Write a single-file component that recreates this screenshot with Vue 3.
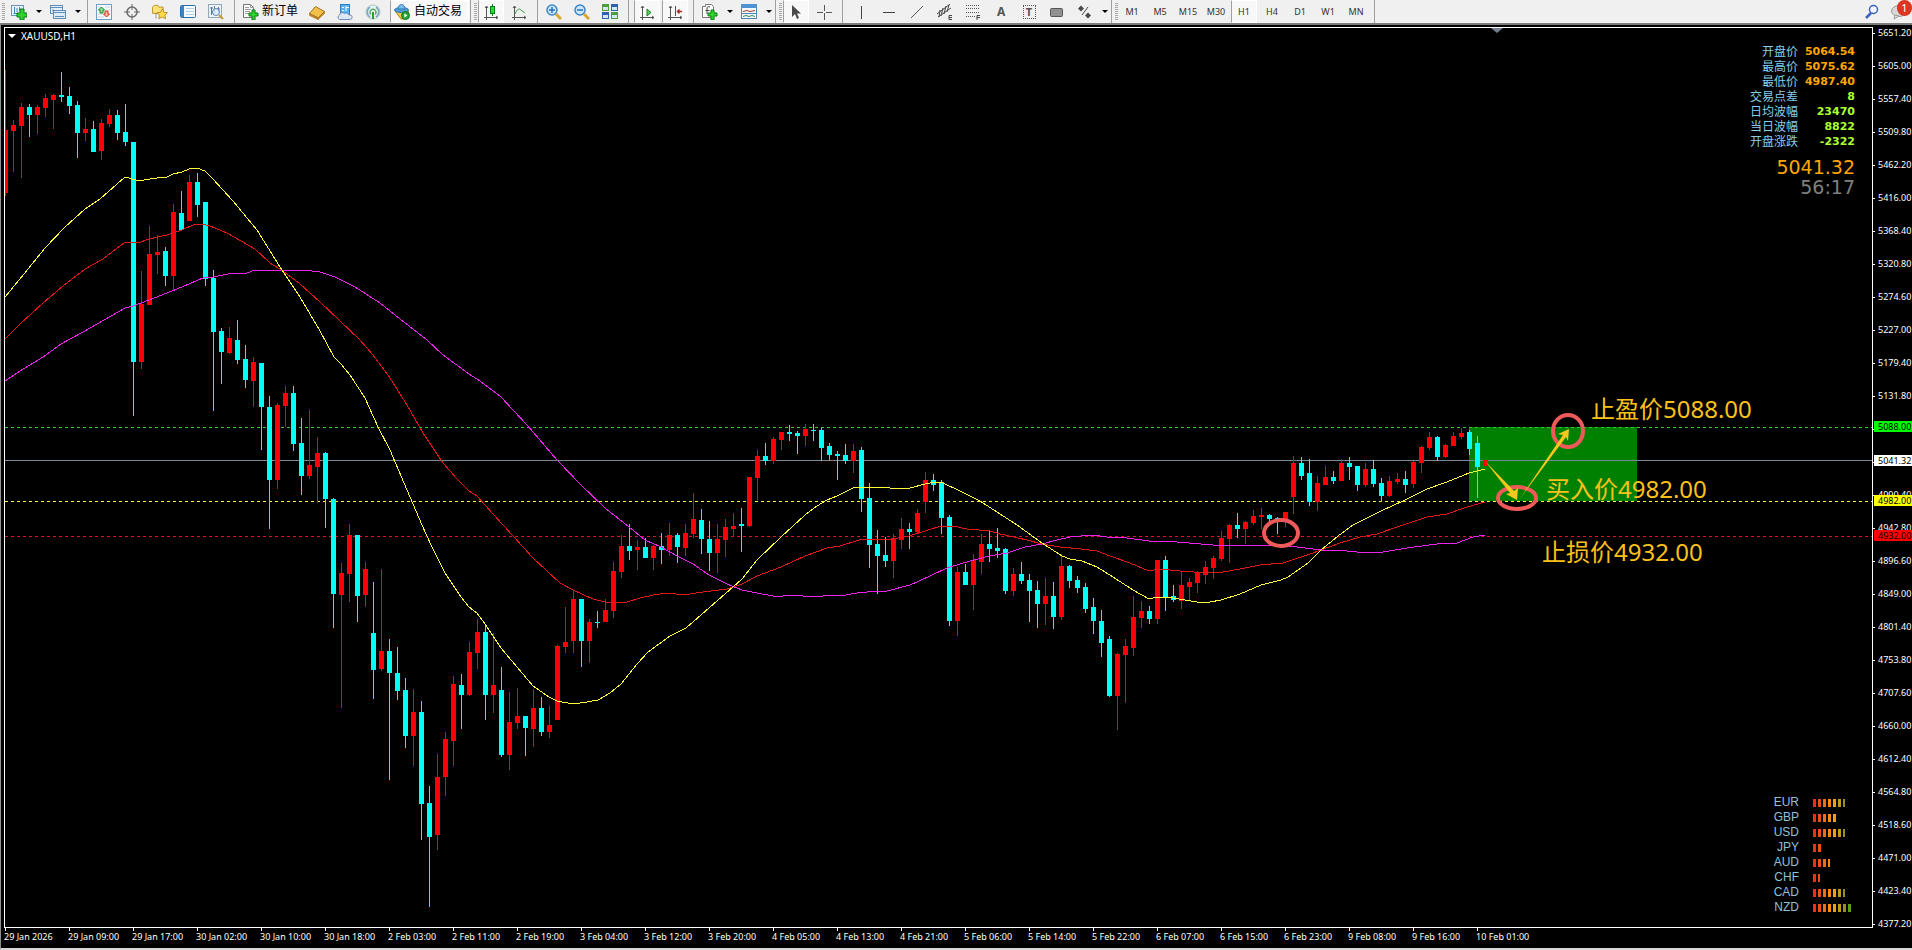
<template>
  <div class="terminal">
    <svg class="sprite" aria-hidden="true">
      <symbol id="i-new-chart" viewBox="0 0 16 16">
        <rect x="0.5" y="1.5" width="12" height="10" fill="#e8f2fb" stroke="#6f95b5" />
        <path d="M2.5 9.5h8M3.5 3v7M6 4v4M8.5 3v4" stroke="#4f86b8" fill="none" />
        <path d="M9 5h4v4h3v4h-3v3H9v-3H6V9h3z" fill="#2fd32f" stroke="#0c7d12" />
      </symbol>
      <symbol id="i-profiles" viewBox="0 0 16 16">
        <rect x="0.5" y="1.5" width="12" height="8" fill="#e4f0fa" stroke="#5d8fba" />
        <path d="M1 3.5h11" stroke="#5d8fba" />
        <rect x="3.5" y="6.5" width="12" height="8" fill="#dcebf8" stroke="#5d8fba" />
        <path d="M4 8.5h11M5 12.5h9M3 5v3" stroke="#5d8fba" />
      </symbol>
      <symbol id="i-market" viewBox="0 0 16 16">
        <rect x="0.5" y="0.5" width="15" height="15" fill="#f8fbff" stroke="#6d9cc6" />
        <path d="M2 3h3M2 6h2M9 3h5M11 6h3M2 10h4M2 13h6" stroke="#c3d3e2" />
        <path d="M5.500 3l3 3h-1.500v3h-3v-3h-1.500z" fill="#8de08d" stroke="#1a8a2a" />
        <path d="M10.500 13l-3-3h1.500v-3h3v3h1.500z" fill="#ffb4a0" stroke="#d0301a" />
      </symbol>
      <symbol id="i-target" viewBox="0 0 16 16">
        <circle cx="8" cy="8" r="5" fill="none" stroke="#6a6a6a" stroke-width="1.500" />
        <path d="M8 0v6M8 10v6M0 8h6M10 8h6" stroke="#6a6a6a" />
      </symbol>
      <symbol id="i-favorites" viewBox="0 0 18 16">
        <path d="M0.500 2.500l2-2h4l1 2h5v7h-12z" fill="#ffe27a" stroke="#b58a1e" />
        <path d="M4.500 10v6" stroke="#333" stroke-dasharray="1 1" />
        <path d="M11.500 4.500l2 3.800 4 .5-3 2.800.8 4-3.800-2-3.800 2 .8-4-3-2.800 4-.5z" fill="#ffd94a" stroke="#b58a1e" />
      </symbol>
      <symbol id="i-book" viewBox="0 0 16 16">
        <rect x="0.500" y="1.500" width="15" height="12" rx="1" fill="#f4f9fe" stroke="#2d6fae" />
        <rect x="1" y="2" width="3" height="11" fill="#3f82c2" />
        <path d="M6 4.500h8M6 7.500h8M6 10.500h8" stroke="#b5cfe6" />
      </symbol>
      <symbol id="i-tester" viewBox="0 0 16 16">
        <rect x="0.500" y="0.500" width="13" height="13" fill="#eef4fa" stroke="#8fa8be" />
        <path d="M3.500 3v8M6.500 2v7M10.500 3v5M2 4h3M9 5h3" stroke="#59789a" />
        <circle cx="8" cy="8" r="3.500" fill="#d9ecfa" fill-opacity="0.800" stroke="#5c84a6" />
        <path d="M11 11l4 4" stroke="#c99a32" stroke-width="2" />
      </symbol>
      <symbol id="i-order" viewBox="0 0 16 16">
        <path d="M0.500 0.500h7l3 3v10h-10z" fill="#fdfdfd" stroke="#777" />
        <path d="M7.500 0.500v3h3M2 3.500h4M2 5.500h6M2 7.500h5M2 9.500h4" stroke="#999" fill="none" />
        <path d="M9 6h3v3h3v3h-3v4H9v-4H6V9h3z" fill="#2fd32f" stroke="#0c7d12" />
      </symbol>
      <symbol id="i-gold" viewBox="0 0 16 16">
        <path d="M0.500 9.500L6.500 2.500l9 5-6 6.500z" fill="#f1c04a" stroke="#a5711a" />
        <path d="M0.500 9.500l8.500 4.500v1.500l-8.500-4zM9 14l6.500-6.500v2L9 15.500z" fill="#c98a22" stroke="#9a6412" stroke-width="0.500" />
      </symbol>
      <symbol id="i-server" viewBox="0 0 16 16">
        <rect x="3.500" y="0.500" width="9" height="10" fill="#5ab0ee" stroke="#2b7fc4" />
        <path d="M5 3.500h2M5 6.500h2M9 2v5M9 3.500h3" stroke="#fff" />
        <path d="M2.500 15.500a2.500 2.500 0 0 1 0-4.500 3 3 0 0 1 5-1.500 3 3 0 0 1 4.500 1.500 2.300 2.300 0 0 1 1.500 4.500z" fill="#dde8f4" stroke="#6a8cb4" />
      </symbol>
      <symbol id="i-signal" viewBox="0 0 16 16">
        <circle cx="8" cy="8" r="7" fill="#e9f3ee" stroke="#a4c8be" />
        <path d="M5 13a6 6 0 0 1 0-10M11 3a6 6 0 0 1 0 10" stroke="#7aa4c0" fill="none" stroke-width="1.500" />
        <path d="M6 10.500a3 3 0 1 1 4 0" stroke="#5cb06a" fill="none" stroke-width="1.500" />
        <path d="M8 8v7" stroke="#2f9a3a" stroke-width="2" />
      </symbol>
      <symbol id="i-auto" viewBox="0 0 16 16">
        <path d="M1 7l6 8h3l5-8z" fill="#f5c842" stroke="#b08a22" />
        <ellipse cx="7.500" cy="6" rx="7" ry="2.500" fill="#4f9ed8" stroke="#2d78b4" />
        <path d="M4 5c0-6 7-6 7 0z" fill="#7dbdea" stroke="#2d78b4" />
        <circle cx="11.500" cy="11.500" r="4" fill="#27a836" stroke="#107a1c" />
        <path d="M10.300 9.500v4l3-2z" fill="#fff" />
      </symbol>
      <symbol id="i-candles" viewBox="0 0 16 16">
        <path d="M3.500 2v14M1 13.500h14M2 4l1.500-2L5 4M13 12l2 1.500L13 15" stroke="#555" fill="none" />
        <path d="M9.500 0v12" stroke="#0c7d12" />
        <rect x="7.500" y="2.500" width="4" height="7" fill="#2fd04a" stroke="#0c7d12" />
      </symbol>
      <symbol id="i-line" viewBox="0 0 16 16">
        <path d="M3.500 2v14M1 13.500h14M2 4l1.500-2L5 4M13 12l2 1.500L13 15" stroke="#555" fill="none" />
        <path d="M4 10c2-5 4-6 6-4l4 3" stroke="#3d9a4a" fill="none" />
      </symbol>
      <symbol id="i-zoom-in" viewBox="0 0 16 16">
        <path d="M10 10l5 5" stroke="#d8a832" stroke-width="3" />
        <circle cx="6" cy="6" r="5" fill="#cfe7fa" stroke="#3c87c8" stroke-width="1.500" />
        <path d="M3 6h6M6 3v6" stroke="#2472bd" stroke-width="1.500" />
      </symbol>
      <symbol id="i-zoom-out" viewBox="0 0 16 16">
        <path d="M10 10l5 5" stroke="#d8a832" stroke-width="3" />
        <circle cx="6" cy="6" r="5" fill="#cfe7fa" stroke="#3c87c8" stroke-width="1.500" />
        <path d="M3 6h6" stroke="#2472bd" stroke-width="1.500" />
      </symbol>
      <symbol id="i-tile" viewBox="0 0 16 16">
        <path d="M0 0h7v7H0zM9 8h7v7H9z" fill="#4c9e3c" />
        <path d="M9 0h7v7H9zM0 8h7v7H0z" fill="#2d62ae" />
        <path d="M1 3h5v3H1zM10 3h5v3h-5zM1 11h5v3H1zM10 11h5v3h-5z" fill="#d4e6f2" />
      </symbol>
      <symbol id="i-scroll" viewBox="0 0 16 16">
        <path d="M3.500 2v14M1 13.500h14M2 4l1.500-2L5 4M13 12l2 1.500L13 15" stroke="#555" fill="none" />
        <path d="M8 5v7l4-3.500z" fill="#62d060" stroke="#14801c" />
      </symbol>
      <symbol id="i-shift" viewBox="0 0 16 16">
        <path d="M3.500 2v14M1 13.500h14M2 4l1.500-2L5 4M13 12l2 1.500L13 15M8.500 2v10" stroke="#555" fill="none" />
        <path d="M15 7.500h-4M12.500 5.500l-2 2 2 2" stroke="#b02a1a" fill="none" stroke-width="1.500" />
      </symbol>
      <symbol id="i-indicator" viewBox="0 0 16 16">
        <path d="M0.500 2.500h3v-2h6l2 2v11h-11z" fill="#fdfdfd" stroke="#777" />
        <path d="M8 3c-2-1-3 0-3 2v5M3.500 6.500h4" stroke="#444" fill="none" />
        <path d="M9 6h3v3h3v3h-3v4H9v-4H6V9h3z" fill="#2fd32f" stroke="#0c7d12" />
      </symbol>
      <symbol id="i-template" viewBox="0 0 16 16">
        <rect x="0.500" y="0.500" width="15" height="14" fill="#f6fafd" stroke="#4f86b8" />
        <path d="M0 0h16v4H0z" fill="#4d92d2" />
        <path d="M2 7.500l4-1 3 1 5-1" stroke="#a03a2a" fill="none" />
        <path d="M1 9.500h14" stroke="#4f86b8" />
        <path d="M2 12.500l3-1 3 1 3-1 3 1" stroke="#2f8a4a" fill="none" />
      </symbol>
      <symbol id="i-cursor" viewBox="0 0 16 16">
        <path d="M4 1v12l3-3 2 5 2-1-2-4.500h4z" fill="#4a4a4a" />
      </symbol>
      <symbol id="i-cross" viewBox="0 0 16 16">
        <path d="M8.500 1v6M8.500 9v7M1 8.500h6M10 8.500h6" stroke="#555" />
      </symbol>
      <symbol id="i-vline" viewBox="0 0 16 16"><path d="M8.500 2v13" stroke="#444" /></symbol>
      <symbol id="i-hline" viewBox="0 0 16 16"><path d="M2 8.500h12" stroke="#444" /></symbol>
      <symbol id="i-trend" viewBox="0 0 16 16"><path d="M2 14L14 2" stroke="#555" /></symbol>
      <symbol id="i-channel" viewBox="0 0 16 16">
        <path d="M0 10L13 0M1 13L14 4M3 6l-1 7M6 4L4 12M9 2L7 10M12 1l-2 7" stroke="#444" fill="none" />
        <path d="M15 11.500h-3v4h3M12 13.500h3" stroke="#444" fill="none" />
      </symbol>
      <symbol id="i-fibo" viewBox="0 0 16 16">
        <path d="M1 1.500h13M1 4.500h13M1 8.500h13M1 12.500h9" stroke="#555" stroke-dasharray="1 1" />
        <path d="M15 11.500h-3v5M12 13.500h3" stroke="#444" fill="none" />
      </symbol>
      <symbol id="i-rect" viewBox="0 0 16 16">
        <rect x="1.500" y="4.500" width="12" height="8" rx="1" fill="#909090" stroke="#555" />
      </symbol>
      <symbol id="i-arrows" viewBox="0 0 16 16">
        <path d="M4 1.500l3 3-3 3-3-3zM11 8.500l3 3-3 3-3-3z" fill="#4a4a4a" />
        <path d="M11 3l-6 8" stroke="#4a4a4a" />
      </symbol>
      <symbol id="i-search" viewBox="0 0 16 16">
        <path d="M7 9l-5 5" stroke="#3a5fc0" stroke-width="2.500" />
        <circle cx="9.500" cy="5.500" r="4" fill="#f4f8ff" stroke="#3a5fc0" stroke-width="1.500" />
      </symbol>
      <symbol id="i-chat" viewBox="0 0 16 16">
        <ellipse cx="8" cy="7" rx="7.500" ry="5.500" fill="#d8d8d8" stroke="#9a9a9a" />
        <path d="M4 11l-1 4 5-3z" fill="#e8e8e8" stroke="#9a9a9a" />
      </symbol>
    </svg>

    <header class="toolbar">
      <span class="grip grip--first"></span>
      <template v-for="(item, i) in tools" :key="i">
        <span v-if="item.kind === 'sep'" class="sep" :class="{ 'sep--wide': item.wide }"></span>
        <span v-else-if="item.kind === 'grip'" class="group-edge"><span class="grip"></span></span>
        <button
          v-else
          type="button"
          class="tool"
          :class="{ 'tool--menu': item.menu, 'tool--on': item.on, 'tool--text': item.text }"
          :aria-label="item.label"
        >
          <svg v-if="item.icon" class="tool__icon" aria-hidden="true"><use :href="'#i-' + item.icon" /></svg>
          <span v-if="item.glyph" class="tool__glyph" :class="{ 'tool__glyph--boxed': item.boxed }">{{ item.glyph }}</span>
          <span v-if="item.text" class="tool__text">{{ item.text }}</span>
          <span v-if="item.menu" class="caret"></span>
        </button>
      </template>
      <button
        v-for="p in periods"
        :key="p"
        type="button"
        class="tool tool--period"
        :class="{ 'tool--on': p === period }"
        @click="period = p"
      >{{ p }}</button>
      <span class="sep"></span>

      <div class="toolbar__right">
        <button type="button" class="tool" aria-label="搜索">
          <svg class="tool__icon" aria-hidden="true"><use href="#i-search" /></svg>
        </button>
        <button type="button" class="tool tool--chat" aria-label="消息">
          <svg class="tool__icon" aria-hidden="true"><use href="#i-chat" /></svg>
          <span class="badge">1</span>
        </button>
      </div>
    </header>

    <main class="chart-window">
      <div class="plot">
        <svg class="plot__canvas">
          <!-- all coordinates are counted from the window corner -->
          <g transform="translate(-5 -28)">
            <rect x="1469" y="427" width="168" height="74" fill="#008000" />
            <polygon points="1491,28 1503,28 1497,33" fill="#708090" />

            <g shape-rendering="crispEdges">
              <line
                v-for="l in levels"
                :key="l.y"
                x1="5"
                x2="101%"
                :y1="l.y + 0.5"
                :y2="l.y + 0.5"
                :stroke="l.stroke"
                :stroke-dasharray="l.dash"
              />
              <g v-for="(c, i) in candles" :key="i" :fill="c[0] ? '#ff0000' : '#00ffff'">
                <rect :x="5 + i * 8" :y="c[1]" width="1" :height="c[4] - c[1]" />
                <rect :x="3 + i * 8" :y="c[2]" width="5" :height="c[3] - c[2]" />
              </g>
              <polyline v-for="m in averages" :key="m.color" :points="m.points" :stroke="m.color" fill="none" />
            </g>

            <g fill="none" stroke="#ee5a5a" stroke-width="4">
              <ellipse cx="1281" cy="533" rx="17" ry="13" />
              <ellipse cx="1517" cy="498" rx="19" ry="11" />
              <ellipse cx="1568" cy="431" rx="15" ry="16" />
            </g>
            <g fill="#f8c81c">
              <polygon points="1485,461 1514,491 1518,488 1517,500 1506,494 1510,493" />
              <polygon points="1519,500 1563,435 1558,434 1569,429 1568,441 1566,437" />
            </g>
            <g class="note">
              <text x="1591" y="418">止盈价5088.00</text>
              <text x="1546" y="498">买入价4982.00</text>
              <text x="1542" y="561">止损价4932.00</text>
            </g>
          </g>
        </svg>

        <div class="symbol"><span class="symbol__arrow"></span>XAUUSD,H1</div>

        <div class="quote">
          <dl class="quote__list">
            <div v-for="q in quotes" :key="q.name" class="quote__row">
              <dt>{{ q.name }}</dt>
              <dd :class="{ 'is-price': q.price }">{{ q.value }}</dd>
            </div>
          </dl>
          <div class="quote__last">5041.32</div>
          <div class="quote__timer">56:17</div>
        </div>

        <ul class="strength">
          <li v-for="s in strength" :key="s.code">
            <span class="strength__code">{{ s.code }}</span>
            <span class="strength__bars">
              <i v-for="n in s.bars" :key="n" :style="{ background: barColors[n - 1] }"></i>
              <i v-if="s.half" class="half" :style="{ background: barColors[s.bars] }"></i>
            </span>
          </li>
        </ul>
      </div>

      <div class="price-axis">
        <span v-for="p in prices" :key="p" class="price">{{ p }}</span>
        <span v-for="t in tags" :key="t.text" class="tag" :class="'tag--' + t.tone" :style="{ top: t.top + 'px' }">{{ t.text }}</span>
      </div>

      <div class="time-axis">
        <span v-for="t in times" :key="t" class="time">{{ t }}</span>
      </div>
    </main>
  </div>
</template>

<script setup>
import { ref } from 'vue'

const sep = { kind: 'sep' }
const wideSep = { kind: 'sep', wide: true }
const grip = { kind: 'grip' }

const tools = [
  { icon: 'new-chart', menu: true, label: '新图表' },
  { icon: 'profiles', menu: true, label: '配置文件' },
  sep,
  { icon: 'market', label: '市场报价' },
  { icon: 'target', label: '数据窗口' },
  { icon: 'favorites', label: '导航' },
  { icon: 'book', label: '终端' },
  { icon: 'tester', label: '策略测试' },
  sep,
  { icon: 'order', text: '新订单', label: '新订单' },
  { icon: 'gold', label: '编辑器' },
  { icon: 'server', label: '云服务' },
  { icon: 'signal', label: '信号' },
  { icon: 'auto', text: '自动交易', on: true, label: '自动交易' },
  grip,
  { icon: 'candles', on: true, label: '蜡烛图' },
  { icon: 'line', label: '折线图' },
  sep,
  { icon: 'zoom-in', label: '放大' },
  { icon: 'zoom-out', label: '缩小' },
  { icon: 'tile', label: '平铺窗口' },
  wideSep,
  { icon: 'scroll', on: true, label: '自动滚动' },
  { icon: 'shift', on: true, label: '图表平移' },
  sep,
  { icon: 'indicator', menu: true, label: '指标' },
  { icon: 'template', menu: true, label: '模板' },
  grip,
  { icon: 'cursor', on: true, label: '光标' },
  { icon: 'cross', label: '十字线' },
  wideSep,
  { icon: 'vline', label: '垂直线' },
  { icon: 'hline', label: '水平线' },
  { icon: 'trend', label: '趋势线' },
  { icon: 'channel', label: '通道' },
  { icon: 'fibo', label: '斐波那契' },
  { glyph: 'A', label: '文字' },
  { glyph: 'T', boxed: true, label: '文字标签' },
  { icon: 'rect', label: '矩形' },
  { icon: 'arrows', menu: true, label: '箭头' },
  grip
]

const periods = ['M1', 'M5', 'M15', 'M30', 'H1', 'H4', 'D1', 'W1', 'MN']
const period = ref('H1')

const quotes = [
  { name: '开盘价', value: '5064.54', price: true },
  { name: '最高价', value: '5075.62', price: true },
  { name: '最低价', value: '4987.40', price: true },
  { name: '交易点差', value: '8' },
  { name: '日均波幅', value: '23470' },
  { name: '当日波幅', value: '8822' },
  { name: '开盘涨跌', value: '-2322' }
]

const barColors = ['#ee3018', '#f04c18', '#ee7014', '#f88a10', '#eea010', '#c09a18', '#94921c', '#5aa018']
const strength = [
  { code: 'EUR', bars: 6, half: true },
  { code: 'GBP', bars: 5 },
  { code: 'USD', bars: 6, half: true },
  { code: 'JPY', bars: 2 },
  { code: 'AUD', bars: 3, half: true },
  { code: 'CHF', bars: 1, half: true },
  { code: 'CAD', bars: 6, half: true },
  { code: 'NZD', bars: 8 }
]

const prices = [
  '5651.20', '5605.00', '5557.40', '5509.80', '5462.20', '5416.00', '5368.40',
  '5320.80', '5274.60', '5227.00', '5179.40', '5131.80', '5085.60', '5038.00',
  '4990.40', '4942.80', '4896.60', '4849.00', '4801.40', '4753.80', '4707.60',
  '4660.00', '4612.40', '4564.80', '4518.60', '4471.00', '4423.40', '4377.20'
]

const tags = [
  { text: '5088.00', top: 394, tone: 'profit' },
  { text: '5041.32', top: 428, tone: 'last' },
  { text: '4982.00', top: 468, tone: 'entry' },
  { text: '4932.00', top: 503, tone: 'stop' }
]

const times = [
  '29 Jan 2026', '29 Jan 09:00', '29 Jan 17:00', '30 Jan 02:00', '30 Jan 10:00', '30 Jan 18:00',
  '2 Feb 03:00', '2 Feb 11:00', '2 Feb 19:00', '3 Feb 04:00', '3 Feb 12:00', '3 Feb 20:00',
  '4 Feb 05:00', '4 Feb 13:00', '4 Feb 21:00', '5 Feb 06:00', '5 Feb 14:00', '5 Feb 22:00',
  '6 Feb 07:00', '6 Feb 15:00', '6 Feb 23:00', '9 Feb 08:00', '9 Feb 16:00', '10 Feb 01:00'
]

const levels = [
  { y: 427, stroke: '#32cd32', dash: '3 3' },
  { y: 460, stroke: '#778899' },
  { y: 501, stroke: '#ffff33', dash: '3 3' },
  { y: 536, stroke: '#dc1428', dash: '3 3' }
]

// [rising, high, body top, body bottom, low]
const candles = [
  [1, 70, 130, 193, 196], [1, 120, 125, 131, 172], [1, 103, 107, 126, 178], [0, 104, 107, 115, 137],
  [1, 105, 107, 115, 134], [1, 94, 98, 108, 117], [1, 94, 95, 100, 129], [0, 72, 95, 97, 102],
  [0, 87, 96, 106, 114], [0, 101, 105, 133, 158], [1, 118, 129, 133, 141], [0, 121, 129, 152, 152],
  [1, 119, 123, 151, 160], [1, 109, 115, 124, 127], [0, 110, 115, 133, 140], [0, 104, 132, 142, 146],
  [0, 142, 142, 362, 416], [1, 271, 304, 362, 369], [1, 226, 254, 305, 305], [1, 235, 252, 255, 274],
  [0, 247, 251, 276, 286], [1, 204, 212, 276, 290], [0, 191, 213, 230, 230], [1, 175, 182, 221, 221],
  [0, 173, 182, 205, 217], [0, 202, 202, 279, 286], [0, 270, 278, 332, 411], [0, 328, 331, 352, 384],
  [1, 327, 338, 353, 354], [0, 320, 340, 360, 364], [0, 345, 359, 380, 388], [1, 357, 362, 381, 407],
  [0, 363, 363, 407, 450], [0, 396, 407, 480, 529], [1, 403, 405, 480, 489], [1, 386, 393, 406, 427],
  [0, 386, 393, 444, 451], [0, 418, 443, 476, 495], [1, 410, 465, 476, 479], [1, 437, 453, 467, 503],
  [0, 452, 453, 499, 528], [0, 498, 499, 594, 628], [1, 563, 573, 595, 708], [1, 524, 535, 574, 602],
  [0, 535, 535, 596, 622], [1, 562, 569, 595, 607], [0, 582, 633, 670, 699], [1, 569, 651, 669, 671],
  [0, 639, 651, 673, 780], [0, 647, 673, 691, 700], [0, 678, 690, 736, 748], [1, 689, 712, 736, 766],
  [0, 701, 712, 804, 840], [0, 786, 803, 837, 907], [1, 754, 777, 835, 850], [1, 732, 739, 777, 796],
  [1, 676, 684, 741, 766], [0, 674, 685, 695, 729], [1, 642, 652, 695, 696], [1, 619, 632, 653, 669],
  [0, 625, 632, 695, 720], [1, 633, 685, 695, 713], [0, 667, 690, 755, 757], [1, 692, 722, 755, 770],
  [1, 688, 716, 723, 729], [0, 716, 716, 728, 756], [1, 689, 708, 729, 747], [0, 697, 708, 732, 736],
  [1, 706, 725, 732, 738], [1, 645, 646, 720, 720], [1, 607, 642, 647, 653], [1, 590, 599, 641, 653],
  [0, 599, 599, 641, 667], [1, 619, 622, 641, 663], [0, 611, 622, 623, 628], [1, 599, 610, 622, 622],
  [1, 562, 571, 611, 618], [1, 535, 546, 572, 578], [0, 524, 546, 551, 560], [1, 540, 547, 550, 570],
  [0, 538, 547, 558, 558], [1, 545, 546, 558, 570], [0, 533, 546, 550, 564], [1, 523, 535, 550, 556],
  [0, 533, 535, 547, 563], [1, 524, 533, 548, 556], [1, 493, 519, 534, 538], [0, 509, 520, 539, 554],
  [0, 521, 539, 553, 571], [1, 524, 539, 553, 573], [1, 519, 527, 540, 557], [1, 513, 526, 529, 537],
  [0, 508, 524, 526, 552], [1, 477, 477, 526, 527], [1, 450, 456, 478, 500], [0, 443, 456, 461, 465],
  [1, 437, 439, 461, 464], [1, 432, 432, 440, 450], [0, 425, 432, 434, 441], [0, 431, 433, 436, 454],
  [1, 424, 429, 436, 446], [0, 424, 430, 431, 441], [0, 428, 430, 448, 461], [0, 443, 446, 455, 460],
  [0, 451, 454, 456, 480], [0, 444, 455, 461, 464], [1, 444, 451, 461, 473], [0, 447, 450, 499, 512],
  [0, 483, 498, 545, 568], [0, 530, 544, 556, 594], [0, 537, 555, 561, 567], [1, 534, 538, 561, 578],
  [1, 518, 529, 540, 549], [0, 523, 529, 532, 549], [1, 509, 513, 532, 533], [1, 472, 480, 502, 513],
  [0, 474, 480, 485, 491], [0, 480, 482, 518, 534], [0, 515, 517, 621, 626], [1, 567, 572, 621, 636],
  [0, 564, 572, 585, 585], [1, 554, 560, 585, 610], [1, 534, 544, 562, 574], [0, 530, 544, 549, 562],
  [0, 528, 548, 551, 558], [0, 548, 549, 591, 594], [1, 568, 574, 591, 596], [0, 562, 574, 581, 584],
  [0, 574, 580, 591, 622], [0, 581, 590, 604, 628], [1, 578, 596, 604, 625], [0, 582, 596, 617, 629],
  [1, 554, 566, 617, 620], [0, 565, 566, 581, 588], [0, 576, 580, 588, 593], [0, 583, 587, 609, 613],
  [0, 598, 607, 621, 634], [0, 610, 621, 643, 657], [0, 636, 639, 696, 697], [1, 653, 654, 696, 730],
  [1, 639, 646, 655, 703], [1, 596, 617, 648, 656], [1, 601, 611, 618, 628], [0, 606, 611, 619, 624],
  [1, 560, 560, 619, 624], [0, 556, 560, 597, 611], [0, 585, 596, 600, 602], [1, 572, 585, 601, 609],
  [1, 578, 582, 587, 601], [1, 571, 573, 583, 593], [1, 561, 567, 575, 584], [1, 556, 558, 568, 579],
  [1, 531, 538, 559, 561], [1, 524, 525, 539, 563], [0, 513, 525, 529, 538], [1, 521, 522, 529, 544],
  [1, 510, 516, 523, 525], [1, 508, 515, 517, 529], [0, 514, 515, 519, 522], [0, 517, 518, 519, 534],
  [1, 512, 512, 519, 527], [1, 456, 463, 497, 514], [0, 457, 463, 476, 480], [0, 459, 473, 502, 506],
  [1, 476, 483, 502, 511], [1, 466, 477, 485, 485], [0, 471, 477, 481, 484], [1, 459, 463, 481, 481],
  [0, 457, 463, 467, 480], [0, 466, 466, 485, 491], [1, 463, 469, 485, 487], [0, 460, 469, 484, 487],
  [0, 478, 483, 496, 502], [1, 476, 481, 496, 497], [1, 473, 479, 482, 484], [0, 471, 479, 485, 493],
  [1, 461, 462, 484, 488], [1, 446, 447, 463, 473], [1, 432, 437, 448, 450], [0, 436, 437, 457, 461],
  [1, 444, 445, 457, 458], [1, 432, 436, 446, 446], [1, 428, 433, 437, 439], [0, 430, 432, 449, 455],
  [0, 436, 443, 467, 498], [1, 459, 460, 466, 467]
]

const averages = [
  {
    color: '#ee22ee',
    points: '5,381 20,371 43,357 61,344 83,332 125,308 133,306 149,300 177,289 203,278 213,277 233,273 247,273 255,270 267,271 283,270 303,270 320,272 335,277 355,287 380,303 400,319 427,340 443,355 469,374 480,381 501,397 527,425 557,460 581,485 605,508 629,527 645,540 661,547 677,556 693,564 709,575 727,584 742,590 757,593 773,596 783,596 790,595 803,596 823,596 832,595 840,596 857,593 877,591 887,591 910,585 930,576 947,568 963,563 989,556 1007,553 1025,547 1042,544 1057,540 1070,537 1093,535 1107,537 1127,538 1149,541 1177,542 1213,545 1280,545 1297,547 1321,550 1347,551 1367,553 1383,552 1407,548 1437,544 1457,543 1473,537 1485,535'
  },
  {
    color: '#e01818',
    points: '5,339 20,324 43,303 63,286 85,269 103,259 125,242 138,243 149,239 167,235 182,230 193,225 202,224 210,226 227,233 255,249 270,263 283,271 300,284 320,302 340,321 360,340 373,355 388,375 407,405 423,433 443,463 457,479 469,491 477,496 493,514 513,536 533,558 560,583 573,590 593,599 605,602 627,602 640,598 653,595 668,593 683,595 703,592 727,589 742,584 757,576 781,567 805,556 827,548 840,546 859,540 867,539 877,539 893,539 909,536 925,531 941,526 953,526 967,529 990,531 1000,534 1027,540 1042,544 1060,547 1081,549 1097,551 1110,556 1130,563 1149,571 1160,569 1180,571 1207,573 1223,572 1240,569 1260,565 1283,563 1310,554 1321,550 1340,543 1360,537 1377,534 1400,526 1427,517 1447,514 1467,507 1485,502'
  },
  {
    color: '#ffff3c',
    points: '5,297 24,274 45,248 65,227 85,209 100,199 125,177 136,180 144,180 157,178 167,177 173,174 182,172 189,169 197,168 205,171 213,179 233,201 257,230 280,267 300,297 320,331 334,357 341,364 350,375 365,398 378,427 390,450 407,490 422,525 432,547 445,573 461,597 469,607 477,613 485,624 501,648 517,667 533,686 549,697 557,701 573,704 587,702 598,700 610,693 621,684 637,664 648,652 670,636 686,628 701,615 717,601 733,587 742,579 757,560 781,537 805,515 817,506 827,500 837,496 853,488 867,487 883,487 890,488 910,488 925,484 936,482 943,483 960,491 980,501 997,512 1017,525 1042,543 1062,556 1070,559 1082,561 1097,567 1113,577 1133,590 1149,599 1157,597 1173,598 1197,602 1210,602 1221,600 1240,594 1261,585 1281,580 1288,577 1308,563 1321,550 1338,536 1353,525 1365,519 1383,510 1403,501 1427,489 1447,482 1469,473 1485,469'
  }
]
</script>

<style>
html,
body {
  margin: 0;
  background: #000000;
}
</style>

<style scoped>
.terminal {
  display: flex;
  flex-direction: column;
  height: 100vh;
  overflow: hidden;
  background: #000000;
  font-family: "Noto Sans", "Noto Sans CJK SC", sans-serif;
}
.sprite {
  position: absolute;
  width: 0;
  height: 0;
}

/* ===== toolbar ===== */
.toolbar {
  display: flex;
  align-items: stretch;
  flex: none;
  height: 23px;
  padding-left: 2px;
  background: #f0f0f0;
  border-bottom: 2px solid #7c7c7c;
}
.grip {
  width: 3px;
  margin: 3px 0;
  background: repeating-linear-gradient(#a8a8a8 0 1px, #f0f0f0 1px 2px);
}
.group-edge {
  display: flex;
  gap: 3px;
  padding-left: 1px;
}
.group-edge::before {
  content: "";
  width: 1px;
  background: #a0a0a0;
}
.sep {
  flex: none;
  width: 1px;
  margin: 0 2px 0 4px;
  background: #a0a0a0;
}
.sep--wide {
  margin-right: 4px;
}
.tool {
  display: flex;
  align-items: center;
  justify-content: center;
  flex: none;
  box-sizing: border-box;
  width: 28px;
  padding: 0;
  border: 0;
  background: transparent;
  color: #333333;
  font-family: inherit;
}
.tool__icon {
  flex: none;
  width: 16px;
  height: 16px;
}
.tool--menu {
  justify-content: flex-start;
  gap: 9px;
  width: 39px;
  padding-left: 6px;
}
.tool--text {
  justify-content: flex-start;
  gap: 3px;
  width: auto;
  padding: 0 5px 0 6px;
}
.tool__text {
  color: #000000;
  font-size: 12px;
  line-height: 16px;
  padding-bottom: 2px;
}
.tool--on {
  width: 26px;
  margin: 0 1px;
  border: 1px solid #ffffff;
  border-left-color: #a0a0a0;
  background: #f8f8f8;
}
.tool--text.tool--on {
  width: auto;
  gap: 4px;
  margin: 0 0 0 3px;
  padding: 0 6px 0 3px;
}
.tool__glyph {
  color: #555555;
  font-size: 12px;
  font-weight: 700;
  line-height: 12px;
}
.tool__glyph--boxed {
  width: 11px;
  border: 1px dotted #555555;
  font-size: 11px;
}
.tool--period {
  font-size: 9px;
}
.caret {
  border: 3px solid transparent;
  border-top-color: #000000;
  border-bottom: 0;
}
.toolbar__right {
  display: flex;
  margin-left: auto;
}
.tool--chat {
  position: relative;
  width: 26px;
}
.badge {
  position: absolute;
  top: 0;
  right: 0;
  width: 15px;
  height: 16px;
  border-radius: 8px;
  background: #dc3522;
  color: #ffffff;
  font-size: 11px;
  line-height: 16px;
}

/* ===== chart ===== */
.chart-window {
  display: grid;
  grid-template: minmax(0, 1fr) 20px / minmax(0, 1fr) 39px;
  flex: 1;
  min-height: 0;
  padding: 2px 0 0 3px;
  border-left: 1px solid #909090;
  border-bottom: 2px solid #d8d8d8;
}
.plot {
  position: relative;
  border: 1px solid #ffffff;
}
.plot__canvas {
  display: block;
  width: 100%;
  height: 100%;
}
.note {
  fill: #fcc01c;
  font-size: 24px;
}
.symbol {
  position: absolute;
  top: 2px;
  left: 3px;
  display: flex;
  align-items: center;
  gap: 5px;
  color: #ffffff;
  font-size: 10px;
  line-height: 12px;
}
.symbol__arrow {
  border: 4px solid transparent;
  border-top-color: #ffffff;
  border-bottom: 0;
}

/* ===== quote panel ===== */
.quote {
  position: absolute;
  top: 16px;
  right: 17px;
  text-align: right;
}
.quote__list {
  margin: 0 0 8px;
}
.quote__row {
  display: flex;
  justify-content: flex-end;
  gap: 5px;
  line-height: 15px;
}
.quote__row dt {
  color: #87ceeb;
  font-size: 12px;
}
.quote__row dd {
  width: 52px;
  margin: 0;
  color: #adff2f;
  font: bold 11px/15px "DejaVu Sans", sans-serif;
}
.quote__row .is-price {
  color: #ffa500;
}
.quote__last,
.quote__timer {
  font: 19px/20px "DejaVu Sans", sans-serif;
}
.quote__last {
  color: #ffa500;
}
.quote__timer {
  color: #808080;
}

/* ===== currency strength ===== */
.strength {
  position: absolute;
  right: 17px;
  bottom: 12px;
  margin: 0;
  padding: 0;
  list-style: none;
  color: #8fc0dc;
  font: 12px/15px "Liberation Sans", sans-serif;
}
.strength li {
  display: flex;
  align-items: center;
  justify-content: flex-end;
  gap: 14px;
}
.strength__bars {
  display: flex;
  gap: 2px;
  width: 42px;
}
.strength__bars i {
  width: 3px;
  height: 8px;
}
.strength__bars .half {
  width: 2px;
}

/* ===== axes ===== */
.price-axis {
  position: relative;
  display: flex;
  flex-direction: column;
  gap: 21px;
  color: #ffffff;
  font-size: 9px;
  line-height: 12px;
}
.price {
  display: flex;
  align-items: center;
  gap: 3px;
}
.price::before {
  content: "";
  width: 2px;
  height: 1px;
  background: #ffffff;
}
.tag {
  position: absolute;
  left: 1px;
  right: 0;
  padding-left: 4px;
  color: #000000;
  line-height: 11px;
}
.tag--profit {
  background: #00ff00;
}
.tag--last {
  background: #ffffff;
}
.tag--entry {
  background: #ffff00;
}
.tag--stop {
  background: #ff0000;
}
.time-axis {
  display: flex;
  overflow: hidden;
  color: #ffffff;
  font-size: 9px;
  line-height: 12px;
}
.time {
  position: relative;
  flex: none;
  width: 64px;
  padding-top: 3px;
}
.time::before {
  content: "";
  position: absolute;
  top: 0;
  left: 1px;
  width: 1px;
  height: 3px;
  background: #ffffff;
}
</style>
